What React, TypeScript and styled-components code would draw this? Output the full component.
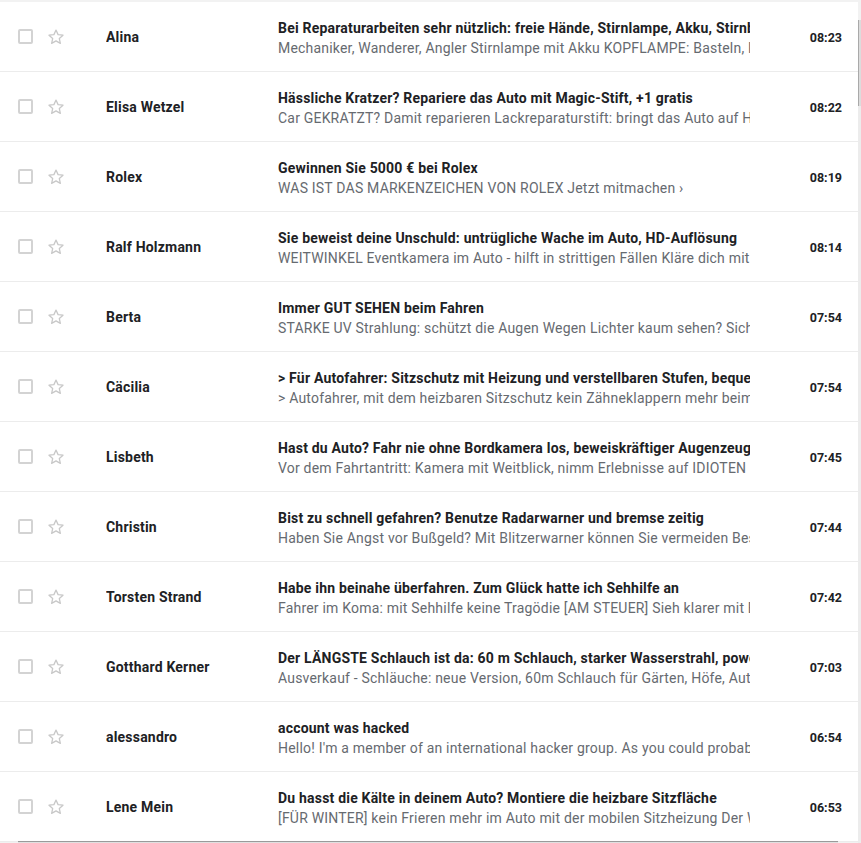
import React from "react";
import styled, { createGlobalStyle } from "styled-components";

const Global = createGlobalStyle`
  html, body { margin: 0; padding: 0; background: #f2f2f2; }
  body { font-family: Roboto, "Noto Sans", Arial, sans-serif; overflow: hidden; }
`;

const Frame = styled.div`
  position: relative;
  width: 861px;
  height: 843px;
  padding-top: 2px;
  box-sizing: border-box;
  overflow: hidden;
  background: #f2f2f2;
`;

const List = styled.div`
  width: 858px;
  background: #fff;
  display: flex;
  flex-direction: column;
`;

const Row = styled.div`
  display: grid;
  grid-template-columns: 18px 15px 15px 17px 41px 172px 472px 1fr;
  align-items: center;
  height: 69px;
  border-bottom: 1px solid #ececec;
  box-sizing: content-box;
`;

const Check = styled.span`
  grid-column: 2;
  width: 15px;
  height: 15px;
  box-sizing: border-box;
  border: 2px solid #d3d3d3;
  border-radius: 2px;
`;

const Star = styled.svg`
  grid-column: 4;
  width: 18px;
  height: 18px;
  margin-left: -1px;
`;

const Sender = styled.div`
  grid-column: 6;
  font-size: 14px;
  font-weight: 700;
  letter-spacing: 0.2px;
  color: #202124;
  white-space: nowrap;
  overflow: hidden;
`;

const Texts = styled.div`
  grid-column: 7;
  display: flex;
  flex-direction: column;
  overflow: hidden;
  white-space: nowrap;
  margin-top: 2px;
`;

const Subject = styled.div`
  font-size: 14px;
  font-weight: 700;
  letter-spacing: 0.2px;
  color: #202124;
  line-height: 20px;
  overflow: hidden;
`;

const Snippet = styled.div`
  font-size: 14px;
  letter-spacing: 0.2px;
  color: #666a70;
  line-height: 20px;
  overflow: hidden;
`;

const Time = styled.div`
  grid-column: 8;
  justify-self: end;
  padding-right: 16px;
  margin-top: 2px;
  font-size: 12.5px;
  font-weight: 700;
  color: #202124;
`;

const VTrack = styled.div`
  position: absolute;
  right: 0;
  top: 20px;
  width: 3px;
  height: 823px;
  background: #ececec;
`;

const VThumb = styled.div`
  position: absolute;
  right: 0;
  top: 20px;
  width: 3px;
  height: 86px;
  border-left: 1px solid #a9a9a9;
  box-sizing: border-box;
  background: #dcdcdc;
`;

const HBar = styled.div`
  position: absolute;
  left: 18px;
  bottom: 0;
  width: 820px;
  height: 2px;
  border-top: 1px solid #9a9a9a;
  box-sizing: border-box;
  background: #e0e0e0;
`;

const mails = [
  ["Alina", "Bei Reparaturarbeiten sehr nützlich: freie Hände, Stirnlampe, Akku, Stirnband", "Mechaniker, Wanderer, Angler Stirnlampe mit Akku KOPFLAMPE: Basteln, Reparieren", "08:23"],
  ["Elisa Wetzel", "Hässliche Kratzer? Repariere das Auto mit Magic-Stift, +1 gratis", "Car GEKRATZT? Damit reparieren Lackreparaturstift: bringt das Auto auf Hochglanz", "08:22"],
  ["Rolex", "Gewinnen Sie 5000 € bei Rolex", "WAS IST DAS MARKENZEICHEN VON ROLEX Jetzt mitmachen ›", "08:19"],
  ["Ralf Holzmann", "Sie beweist deine Unschuld: untrügliche Wache im Auto, HD-Auflösung", "WEITWINKEL Eventkamera im Auto - hilft in strittigen Fällen Kläre dich mit Beweisen", "08:14"],
  ["Berta", "Immer GUT SEHEN beim Fahren", "STARKE UV Strahlung: schützt die Augen Wegen Lichter kaum sehen? Sicher fahren", "07:54"],
  ["Cäcilia", "> Für Autofahrer: Sitzschutz mit Heizung und verstellbaren Stufen, bequem", "> Autofahrer, mit dem heizbaren Sitzschutz kein Zähneklappern mehr beim Fahren", "07:54"],
  ["Lisbeth", "Hast du Auto? Fahr nie ohne Bordkamera los, beweiskräftiger Augenzeuge", "Vor dem Fahrtantritt: Kamera mit Weitblick, nimm Erlebnisse auf IDIOTEN am Steuer", "07:45"],
  ["Christin", "Bist zu schnell gefahren? Benutze Radarwarner und bremse zeitig", "Haben Sie Angst vor Bußgeld? Mit Blitzerwarner können Sie vermeiden Bescheide", "07:44"],
  ["Torsten Strand", "Habe ihn beinahe überfahren. Zum Glück hatte ich Sehhilfe an", "Fahrer im Koma: mit Sehhilfe keine Tragödie [AM STEUER] Sieh klarer mit Brille", "07:42"],
  ["Gotthard Kerner", "Der LÄNGSTE Schlauch ist da: 60 m Schlauch, starker Wasserstrahl, power", "Ausverkauf - Schläuche: neue Version, 60m Schlauch für Gärten, Höfe, Autos", "07:03"],
  ["alessandro", "account was hacked", "Hello! I'm a member of an international hacker group. As you could probably see", "06:54"],
  ["Lene Mein", "Du hasst die Kälte in deinem Auto? Montiere die heizbare Sitzfläche", "[FÜR WINTER] kein Frieren mehr im Auto mit der mobilen Sitzheizung Der Winter", "06:53"],
];

const StarIcon = () => (
  <Star viewBox="0 0 24 24" fill="none" stroke="#c8c8c8" strokeWidth="1.7" strokeLinejoin="round">
    <path d="M12 2.8l2.75 6.05 6.6.7-4.95 4.45 1.4 6.5L12 17.2l-5.8 3.3 1.4-6.5-4.95-4.45 6.6-.7z" />
  </Star>
);

export default function App() {
  return (
    <Frame>
      <Global />
      <List>
        {mails.map(([from, subj, snip, time]) => (
          <Row key={from}>
            <Check />
            <StarIcon />
            <Sender>{from}</Sender>
            <Texts>
              <Subject>{subj}</Subject>
              <Snippet>{snip}</Snippet>
            </Texts>
            <Time>{time}</Time>
          </Row>
        ))}
      </List>
      <VTrack />
      <VThumb />
      <HBar />
    </Frame>
  );
}
